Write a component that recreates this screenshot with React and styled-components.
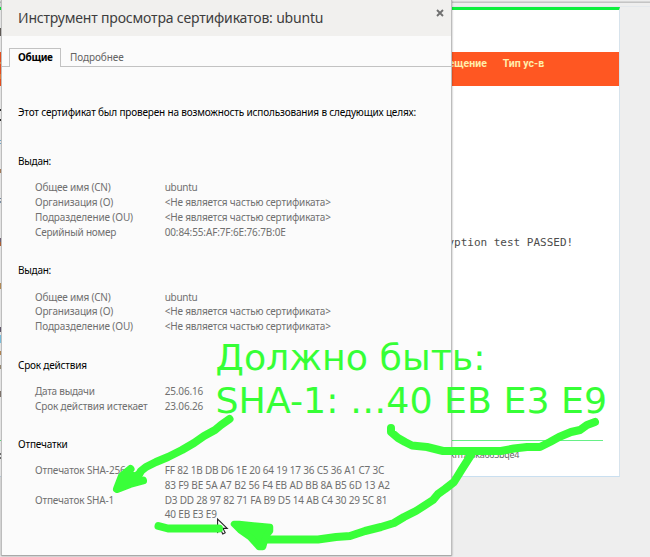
import React from 'react';
import styled, { createGlobalStyle } from 'styled-components';

const GlobalStyle = createGlobalStyle`
  html, body { margin: 0; padding: 0; background: #eeeeee; }
  * { box-sizing: border-box; }
`;

const Screen = styled.div`
  position: relative;
  width: 650px;
  height: 557px;
  overflow: hidden;
  background: #eeeeee;
`;

const Browser = styled.div`
  display: flex;
  flex-direction: column;
  height: 557px;
`;

const ToolbarEdge = styled.div`
  height: 7px;
  border-bottom: 1px solid #e4e8ec;
  background: linear-gradient(#ededed 0 1px, #d6d6d6 1px 2px, #c4c4c4 2px 3px, #eeeeee 3px);
`;

const SitePage = styled.main`
  width: 620px;
  height: 470px;
  display: flex;
  flex-direction: column;
  background: #ffffff;
  border-top: 3px solid #0cf03c;
  border-right: 1px solid #d7e3ec;
  border-bottom: 1px solid #c9dff0;
`;

const MenuBar = styled.nav`
  display: flex;
  gap: 16px;
  height: 34px;
  margin-top: 42px;
  padding: 5px 0 0 448.5px;
  background: #ff5722;
`;

const MenuItem = styled.span`
  font: 700 10.5px/14px Roboto, sans-serif;
  color: #ffedab;
  white-space: pre;
`;

const Console = styled.div`
  margin: 150px 0 0 447.4px;
  font: 11px/14px "DejaVu Sans Mono", monospace;
  color: #4c4c4c;
  white-space: pre;
`;

const FooterRule = styled.div`
  width: 603px;
  height: 1px;
  margin-top: 190px;
  background: #66f086;
`;

const FooterText = styled.div`
  margin: 7px 0 0 450px;
  font: 9px/14px "Noto Sans", sans-serif;
  letter-spacing: -0.3px;
  color: #666666;
  white-space: pre;
`;

const EdgeStrip = styled.svg`
  position: absolute;
  left: 0;
  top: 0;
`;

const Dialog = styled.section`
  position: absolute;
  left: 1px;
  top: 0;
  width: 451px;
  height: 556px;
  display: flex;
  flex-direction: column;
  background: #fbfbfb;
  border: 1px solid #bdbdbd;
  border-top: 0;
  border-bottom-color: #a9a9a9;
  box-shadow: 0 0 2px rgba(0, 0, 0, 0.35);
  font-family: "Noto Sans", sans-serif;
`;

const DialogHeader = styled.header`
  display: flex;
  justify-content: space-between;
  height: 36px;
  padding: 8px 7px 0 16px;
  background: #f1f0ee;
`;

const Title = styled.h1`
  margin: 0;
  font-size: 14px;
  line-height: 20px;
  font-weight: 400;
  letter-spacing: -0.18px;
  color: #3d3d3d;
  white-space: nowrap;
`;

const CloseButton = styled.button`
  display: flex;
  width: 8px;
  height: 8px;
  padding: 0;
  margin-top: 1px;
  border: 0;
  background: none;
`;

const TabBar = styled.div`
  display: flex;
  height: 31px;
  padding: 12px 0 0 7px;
  background: linear-gradient(#c2c2c2, #c2c2c2) 0 100% / 100% 1px no-repeat;
`;

const Tab = styled.div`
  width: ${(p) => p.$width}px;
  height: 19px;
  padding-left: 8px;
  border: 1px solid ${(p) => (p.$active ? '#c2c2c2' : 'transparent')};
  border-bottom: 0;
  background: ${(p) => (p.$active ? '#fbfbfb' : 'transparent')};
  color: ${(p) => (p.$active ? '#000000' : '#646464')};
  font-size: 10px;
  line-height: 17px;
  font-weight: ${(p) => (p.$active ? 700 : 400)};
  letter-spacing: ${(p) => (p.$active ? -0.3 : -0.08)}px;
`;

const Body = styled.div`
  display: flex;
  flex-direction: column;
  padding: 38px 0 0 16px;
`;

const Line = styled.span`
  display: block;
  font-size: 10px;
  line-height: ${(p) => p.$height || 14.8}px;
  letter-spacing: ${(p) => p.$spacing}px;
  color: ${(p) => (p.$strong ? '#000000' : '#707070')};
  white-space: pre;
`;

const Section = styled.section`
  margin-top: ${(p) => p.$top}px;
`;

const Fields = styled.div`
  display: grid;
  grid-template-columns: 129.7px 1fr;
  margin: 11.2px 0 0 17px;
`;

const Markup = styled.svg`
  position: absolute;
  left: 0;
  top: 0;
`;

const Note = styled.div`
  position: absolute;
  left: 215.5px;
  top: 337px;
  font: 36.35px/42.8px "DejaVu Sans", sans-serif;
  color: #36ff36;
  white-space: pre;
`;

const NA = ['<Не является частью сертификата>', -0.18];
const CN = ['Общее имя (CN)', -0.2];
const ORG = ['Организация (O)', -0.19];
const UNIT = ['Подразделение (OU)', -0.13];
const HOST = ['ubuntu', -0.3];

const sections = [
  {
    title: ['Выдан:', -0.25],
    top: 34,
    fields: [
      [CN, HOST],
      [ORG, NA],
      [UNIT, NA],
      [['Серийный номер', -0.23], ['00:84:55:AF:7F:6E:76:7B:0E', -0.13]],
    ],
  },
  { title: ['Выдан:', -0.25], top: 24, fields: [[CN, HOST], [ORG, NA], [UNIT, NA]] },
  {
    title: ['Срок действия', -0.2],
    top: 23.6,
    fields: [
      [['Дата выдачи', -0.26], ['25.06.16', -0.15]],
      [['Срок действия истекает', -0.15], ['23.06.26', -0.15]],
    ],
  },
  {
    title: ['Отпечатки', -0.19],
    top: 23.4,
    fields: [
      [['Отпечаток SHA-256', -0.15], ['FF 82 1B DB D6 1E 20 64 19 17 36 C5 36 A1 C7 3C', -0.18]],
      [['', 0], ['83 F9 BE 5A A7 B2 56 F4 EB AD BB 8A B5 6D 13 A2', -0.145]],
      [['Отпечаток SHA-1', -0.17], ['D3 DD 28 97 82 71 FA B9 D5 14 AB C4 30 29 5C 81', -0.195]],
      [['', 0], ['40 EB E3 E9', -0.16]],
    ],
  },
];

const fragments = [
  [28, 8, '#6b6460'], [62, 2, '#ff9a50'], [74, 5, '#ff8a40'], [109, 2, '#333333'], [119, 2, '#333333'],
  [140, 1, '#7fb8dc'], [143, 1, '#7fb8dc'], [169, 4, '#b58a66'], [198, 1, '#7d93ad'], [201, 2, '#8aa0b8'],
  [238, 4, '#7b6b80'], [242, 4, '#c06a3c'], [283, 6, '#c79a60'], [327, 5, '#6a6078'], [335, 8, '#86d4f5'],
  [351, 4, '#c4935c'], [365, 4, '#a89880'], [391, 6, '#8d8078'], [453, 2, '#777777'], [457, 2, '#777777'],
];

export default function App() {
  return (
    <Screen>
      <GlobalStyle />
      <Browser>
        <ToolbarEdge />
        <SitePage>
          <MenuBar>
            <MenuItem>ещение</MenuItem>
            <MenuItem>Тип ус-в</MenuItem>
          </MenuBar>
          <Console>yption test PASSED!</Console>
          <FooterRule />
          <FooterText>km7t3ka663bqe4</FooterText>
        </SitePage>
      </Browser>
      <EdgeStrip width="2" height="557">
        {fragments.map(([y, h, fill]) => (
          <rect key={y} x="0" y={y} width="2" height={h} fill={fill} />
        ))}
      </EdgeStrip>
      <Dialog>
        <DialogHeader>
          <Title>Инструмент просмотра сертификатов: ubuntu</Title>
          <CloseButton aria-label="Закрыть">
            <svg width="8" height="8" viewBox="0 0 8 8">
              <path d="M1 1 7 7M7 1 1 7" stroke="#707070" strokeWidth="1.9" />
            </svg>
          </CloseButton>
        </DialogHeader>
        <TabBar>
          <Tab $active $width={52}>Общие</Tab>
          <Tab $width={72}>Подробнее</Tab>
        </TabBar>
        <Body>
          <Line $strong $height={15} $spacing={-0.165}>
            Этот сертификат был проверен на возможность использования в следующих целях:
          </Line>
          {sections.map((s, i) => (
            <Section key={i} $top={s.top}>
              <Line $strong $height={15} $spacing={s.title[1]}>{s.title[0]}</Line>
              <Fields>
                {s.fields.map(([label, value], j) => (
                  <React.Fragment key={j}>
                    <Line $spacing={label[1]}>{label[0]}</Line>
                    <Line $spacing={value[1]}>{value[0]}</Line>
                  </React.Fragment>
                ))}
              </Fields>
            </Section>
          ))}
        </Body>
      </Dialog>
      <Note>{'Должно быть:\nSHA-1: …40 EB E3 E9'}</Note>
      <Markup width="650" height="557" viewBox="0 0 650 557">
        <path
          d="M217.6 519v13.2l3-2.8 2.2 4.6 2.4-1.2-2.2-4.4h4.2z"
          fill="#ffffff" stroke="#222222" strokeWidth="1.1"
        />
        <g fill="none" stroke="#39ff39" strokeWidth="8" strokeLinecap="round" strokeLinejoin="round">
          <path d="M229.5 419 221 425 215 430 204 436 194 443 182 450 168 457 156 462 146 467 141 471 137 478" />
          <path d="M130.500 469 122 476 117 489 130 484 143 480.500M122 481 138 475" fill="#39ff39" />
          <path d="M158.500 526 168 528.500H219" />
          <path d="M391 428V432L398 438 405 442 412 445.500 427 447 443 451H501L514 448.500 527 447 540 447 550 442 559 437 571 432 580 430 587 425 595 422" />
          <path d="M471 455 462 469 454 482 445 489 438 494 433 500 416 511 404 517 394 523 381 527 365 531 350 536 336 537 318 539.500H262" />
          <path d="M234 524 239 524 270 527 270 531 266 536 263 547 259 547 250 537 240 530Z" fill="#39ff39" strokeWidth="6.500" />
        </g>
      </Markup>
    </Screen>
  );
}
